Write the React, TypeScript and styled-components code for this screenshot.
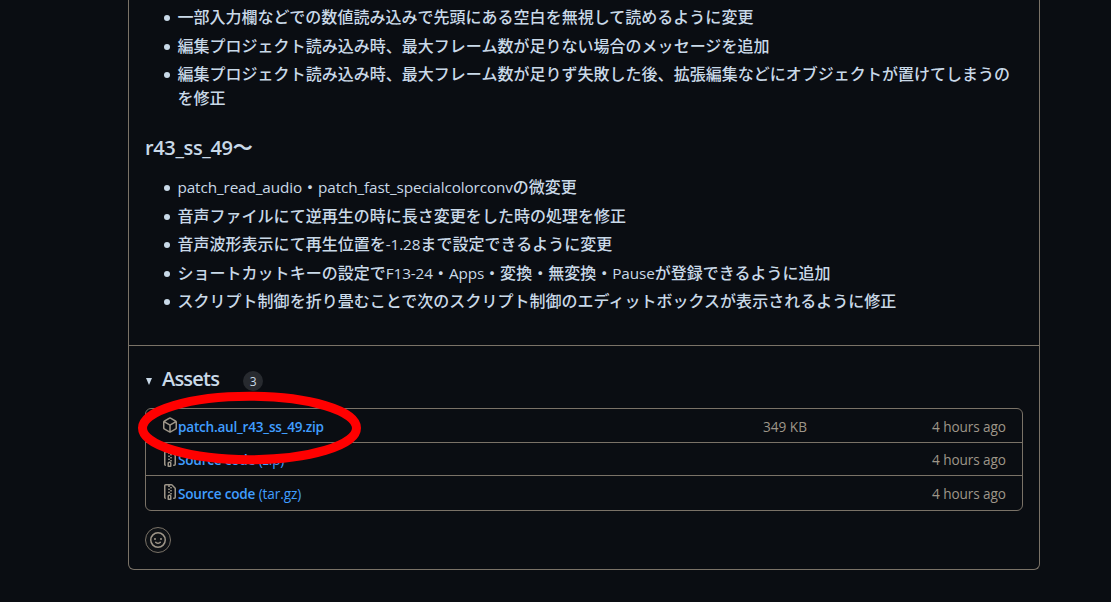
import { FunctionComponent, ReactNode } from "react";
import styled, { createGlobalStyle } from "styled-components";

const GlobalStyle = createGlobalStyle`
  * {
    box-sizing: border-box;
  }
  html, body {
    margin: 0;
    height: 100%;
    overflow: hidden;
    background-color: #0a0d12;
  }
`;

const Page = styled.div`
  position: relative;
  width: 1111px;
  height: 602px;
  padding: 0 71px 0 128px;
  overflow: hidden;
  background-color: #0a0d12;
  color: #c9d9e8;
  font-family: "Open Sans", "Noto Sans CJK JP", sans-serif;
  font-size: 16px;
  line-height: 24px;
`;
const ReleaseCard = styled.div`
  height: 570px;
  border: 1px solid #7a7267;
  border-top: none;
  border-radius: 0 0 6px 6px;
`;
const Notes = styled.div`
  height: 345px;
  padding: 4px 16px 0;
  font-family: "Noto Sans CJK JP", sans-serif;
  font-weight: 500;
`;
const NoteList = styled.ul`
  margin: 0;
  padding: 0;
  list-style: none;
`;
const NoteItem = styled.li`
  display: flex;
  letter-spacing: 0.02px;
  white-space: nowrap;

  & + & {
    margin-top: 4.5px;
  }
  &::before {
    content: "";
    flex-shrink: 0;
    width: 6px;
    height: 6px;
    margin: 11px 8px 0 18.5px;
    border-radius: 50%;
    background-color: #c9d9e8;
  }
`;
const Latin = styled.span`
  font-family: "Open Sans", sans-serif;
  font-size: 15.3px;
  font-weight: 400;
  line-height: 0;
  letter-spacing: -0.12px;
`;
const VersionHeading = styled.h3`
  margin: 25px 0 15px;
  font-size: 20px;
  font-weight: 600;
  line-height: 25px;
`;
const HeadingLatin = styled(Latin)`
  font-size: 20px;
  font-weight: 600;
  letter-spacing: -0.35px;
`;
const AssetsSection = styled.div`
  padding: 21px 16px 0;
  border-top: 1px solid #7a7267;
`;
const AssetsHeader = styled.div`
  display: flex;
  align-items: center;
  height: 25px;
`;
const Disclosure = styled.span`
  width: 0;
  height: 0;
  margin: 4px 9.5px 0 0.5px;
  border-top: 7px solid #c9d9e8;
  border-right: 3.5px solid transparent;
  border-left: 3.5px solid transparent;
`;
const AssetsTitle = styled.h3`
  margin: 0 0 2px 1px;
  font-size: 20px;
  font-weight: 600;
  letter-spacing: -0.8px;
`;
const Counter = styled.span`
  width: 20px;
  height: 20px;
  margin: 3px 0 0 24px;
  border-radius: 50%;
  background-color: #272a2f;
  font-size: 12px;
  line-height: 21px;
  text-align: center;
`;
const AssetTable = styled.div`
  display: grid;
  grid-template-rows: 33px 33px 35px;
  height: 103px;
  margin-top: 16px;
  border: 1px solid #7a7267;
  border-radius: 6px;
`;
const AssetRow = styled.div`
  display: flex;
  align-items: flex-start;
  padding: 8px 16px 0;
  color: #9e9689;
  font-size: 13.6px;
  line-height: 20px;
  white-space: nowrap;

  & + & {
    border-top: 1px solid #7a7267;
  }
  &:nth-child(2) {
    line-height: 18px;
  }
`;
const AssetIcon = styled.svg`
  flex-shrink: 0;
  width: 16px;
  height: 16px;
  fill: currentColor;
`;
const AssetLink = styled.a`
  flex: 1;
  color: #409eff;
  font-weight: 600;
  letter-spacing: -0.23px;
`;
const Format = styled.span`
  font-weight: 400;
  letter-spacing: -0.1px;
`;
const AssetSize = styled.span`
  width: 44px;
  margin-right: 125px;
`;
const AssetTime = styled.span`
  width: 74px;
  letter-spacing: -0.08px;
`;
const ReactionButton = styled.button`
  display: flex;
  align-items: center;
  justify-content: center;
  width: 26px;
  height: 26px;
  margin: 16px 0 0;
  padding: 0;
  border: 1px solid #7a7267;
  border-radius: 50%;
  background-color: #0f1216;
  color: #9e9689;
`;
// Hand drawn marker laid over the first asset
const Marker = styled.svg`
  position: absolute;
  top: 391px;
  left: 137px;
  width: 225px;
  height: 74px;
`;

const icons = {
  package:
    "m8.878.392 5.25 3.045c.54.314.872.89.872 1.514v6.098a1.75 1.75 0 0 1-.872 1.514l-5.25 3.045a1.75 1.75 0 0 1-1.756 0l-5.25-3.045A1.75 1.75 0 0 1 1 11.049V4.951c0-.624.332-1.201.872-1.514L7.122.392a1.75 1.75 0 0 1 1.756 0ZM7.875 1.69l-4.63 2.685L8 7.133l4.755-2.758-4.63-2.685a.248.248 0 0 0-.25 0ZM2.5 5.677v5.372c0 .09.047.171.125.216l4.625 2.683V8.432Zm6.25 8.271 4.625-2.683a.25.25 0 0 0 .125-.216V5.677L8.75 8.432Z",
  zip: "M3.5 1.75v11.5c0 .09.048.173.126.217a.75.75 0 0 1-.752 1.298A1.748 1.748 0 0 1 2 13.25V1.75C2 .784 2.784 0 3.75 0h5.586c.464 0 .909.185 1.237.513l2.914 2.914c.329.328.513.773.513 1.237v8.586A1.75 1.75 0 0 1 12.25 15h-.5a.75.75 0 0 1 0-1.5h.5a.25.25 0 0 0 .25-.25V4.664a.25.25 0 0 0-.073-.177L9.513 1.573a.25.25 0 0 0-.177-.073H7.25a.75.75 0 0 1 0 1.5h-.5a.75.75 0 0 1 0-1.5h-3a.25.25 0 0 0-.25.25Zm3.75 8.75h.5c.966 0 1.75.784 1.75 1.75v3a.75.75 0 0 1-.75.75h-2.5a.75.75 0 0 1-.75-.75v-3c0-.966.784-1.75 1.75-1.75ZM6 5.25a.75.75 0 0 1 .75-.75h.5a.75.75 0 0 1 0 1.5h-.5A.75.75 0 0 1 6 5.25Zm.75 2.25h.5a.75.75 0 0 1 0 1.5h-.5a.75.75 0 0 1 0-1.5ZM8 6.75A.75.75 0 0 1 8.75 6h.5a.75.75 0 0 1 0 1.5h-.5A.75.75 0 0 1 8 6.75ZM8.75 3h.5a.75.75 0 0 1 0 1.5h-.5a.75.75 0 0 1 0-1.5ZM8 9.75A.75.75 0 0 1 8.75 9h.5a.75.75 0 0 1 0 1.5h-.5A.75.75 0 0 1 8 9.75Zm-1 2.5v2.25h1v-2.25a.25.25 0 0 0-.25-.25h-.5a.25.25 0 0 0-.25.25Z",
};

type AssetType = {
  icon: keyof typeof icons;
  name: string;
  format?: string;
  size?: string;
};

const Asset: FunctionComponent<AssetType> = ({ icon, name, format, size }) => {
  return (
    <AssetRow>
      <AssetIcon viewBox="0 0 16 16">
        <path d={icons[icon]} />
      </AssetIcon>
      <AssetLink>
        {name}
        {format && <Format> {format}</Format>}
      </AssetLink>
      {size && <AssetSize>{size}</AssetSize>}
      <AssetTime>4 hours ago</AssetTime>
    </AssetRow>
  );
};

const Note: FunctionComponent<{ children: ReactNode }> = ({ children }) => (
  <NoteItem>
    <div>{children}</div>
  </NoteItem>
);

const App: FunctionComponent = () => {
  return (
    <Page>
      <GlobalStyle />
      <ReleaseCard>
        <Notes>
          <NoteList>
            <Note>一部入力欄などでの数値読み込みで先頭にある空白を無視して読めるように変更</Note>
            <Note>編集プロジェクト読み込み時、最大フレーム数が足りない場合のメッセージを追加</Note>
            <Note>
              編集プロジェクト読み込み時、最大フレーム数が足りず失敗した後、拡張編集などにオブジェクトが置けてしまうの
              <br />
              を修正
            </Note>
          </NoteList>
          <VersionHeading>
            <HeadingLatin>r43_ss_49</HeadingLatin>～
          </VersionHeading>
          <NoteList>
            <Note>
              <Latin>patch_read_audio</Latin>・<Latin>patch_fast_specialcolorconv</Latin>の微変更
            </Note>
            <Note>音声ファイルにて逆再生の時に長さ変更をした時の処理を修正</Note>
            <Note>
              音声波形表示にて再生位置を<Latin>-1.28</Latin>まで設定できるように変更
            </Note>
            <Note>
              ショートカットキーの設定で<Latin>F13-24</Latin>・<Latin>Apps</Latin>
              ・変換・無変換・<Latin>Pause</Latin>が登録できるように追加
            </Note>
            <Note>
              スクリプト制御を折り畳むことで次のスクリプト制御のエディットボックスが表示されるように修正
            </Note>
          </NoteList>
        </Notes>
        <AssetsSection>
          <AssetsHeader>
            <Disclosure />
            <AssetsTitle>Assets</AssetsTitle>
            <Counter>3</Counter>
          </AssetsHeader>
          <AssetTable>
            <Asset icon="package" name="patch.aul_r43_ss_49.zip" size="349 KB" />
            <Asset icon="zip" name="Source code" format="(zip)" />
            <Asset icon="zip" name="Source code" format="(tar.gz)" />
          </AssetTable>
          <ReactionButton>
            <AssetIcon viewBox="0 0 16 16">
              <path d="M8 0a8 8 0 1 1 0 16A8 8 0 0 1 8 0ZM1.5 8a6.5 6.5 0 1 0 13 0 6.5 6.5 0 0 0-13 0Zm3.82 1.636a.75.75 0 0 1 1.038.175l.007.009c.103.118.22.222.35.31.264.178.683.37 1.285.37.602 0 1.02-.192 1.285-.371.13-.088.247-.192.35-.31l.007-.008a.75.75 0 0 1 1.222.87c-.2.25-.43.47-.735.675-.63.418-1.37.638-2.127.629-.946 0-1.652-.308-2.126-.63a3.331 3.331 0 0 1-.735-.675.75.75 0 0 1 .183-1.044ZM12 7a1 1 0 1 1-2 0 1 1 0 0 1 2 0ZM5 8a1 1 0 1 1 0-2 1 1 0 0 1 0 2Z" />
            </AssetIcon>
          </ReactionButton>
        </AssetsSection>
      </ReleaseCard>
      <Marker viewBox="0 0 225 74">
        <ellipse cx="112.5" cy="37" rx="107" ry="31.7" fill="none" stroke="#ff0000" strokeWidth="9" />
      </Marker>
    </Page>
  );
};

export default App;
